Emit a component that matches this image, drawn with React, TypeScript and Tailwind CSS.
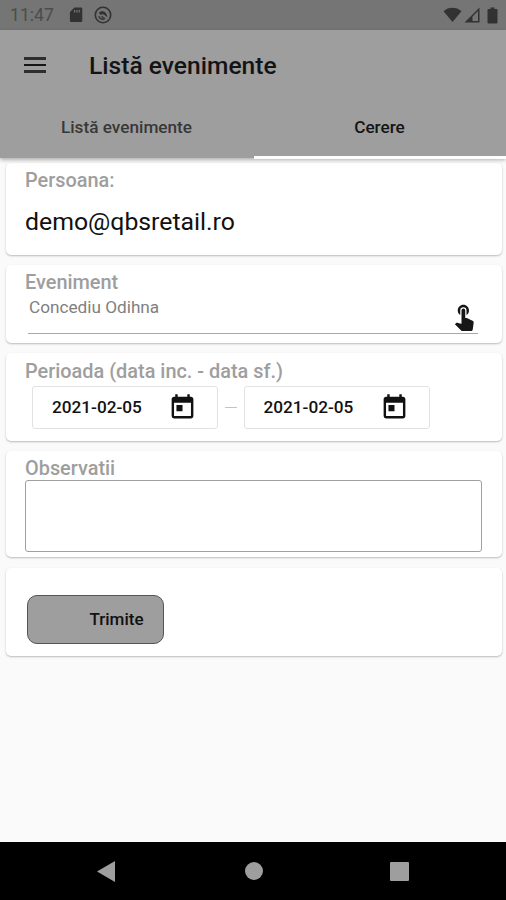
import type { ReactNode } from "react";
import { MdToday, MdTouchApp } from "react-icons/md";

interface CardProps {
  className: string;
  children: ReactNode;
}

function Card({ className, children }: CardProps) {
  return (
    <section
      className={`ml-1.5 mr-1 rounded-[5px] bg-white shadow-[0_1px_2px_rgba(0,0,0,0.26)] ${className}`}
    >
      {children}
    </section>
  );
}

function CardLabel({ children }: { children: ReactNode }) {
  return (
    <h2 className="h-6 whitespace-nowrap text-[19.9px] font-medium leading-[26px] text-[#9e9e9e]">
      {children}
    </h2>
  );
}

function DateField({ value }: { value: string }) {
  return (
    <button className="flex h-[43px] w-[186px] items-center rounded-[3px] border border-[#e2e2e2] pl-[19px] font-medium text-[#111]">
      <span className="w-[91px] whitespace-nowrap pt-px text-left text-[17.2px]">{value}</span>
      <MdToday className="ml-[25px] size-[29px] text-[#111]" />
    </button>
  );
}

function StatusBar() {
  return (
    <div className="flex h-[30px] items-center bg-[#757575] text-[#323232]">
      <span className="ml-2.5 w-[45px] whitespace-nowrap pt-px text-[17.6px] leading-[29px] text-[#4c4c4c]">
        11:47
      </span>
      <svg className="ml-[14px] h-4 w-3.5" viewBox="0 0 14 16">
        <path
          fill="currentColor"
          fillRule="evenodd"
          d="M5.5 0.5H12a1.3 1.3 0 0 1 1.3 1.3v12a1.3 1.3 0 0 1-1.3 1.3H2.2a1.3 1.3 0 0 1-1.3-1.3V5zM5 3v2.5h1.2V3zm2.3 0v2.5h1.2V3zm2.3 0v2.5h1.2V3z"
        />
      </svg>
      <svg
        className="ml-[11px] size-[18px]"
        viewBox="0 0 18 18"
        fill="none"
        stroke="currentColor"
      >
        <circle cx="9" cy="9" r="7.7" strokeWidth="1.6" />
        <path d="M5 6.500C8 3.800 13 5.500 13.300 11.300L9.500 8.200 6 8.800z" fill="currentColor" stroke="none" />
        <path d="M4.800 10.300C5.500 12.500 7.500 13.500 10 13.300" strokeWidth="1.3" />
        <path d="M7.500 10.200 11 13" strokeWidth="1.2" />
      </svg>
      <svg className="ml-auto h-4 w-[19px]" viewBox="0 0 19 16">
        <path fill="currentColor" d="M0.5 4.2C5.8-.3 13.2-.3 18.5 4.2L9.5 15z" />
      </svg>
      <svg className="ml-[2px] size-4" viewBox="0 0 16 16">
        <path fill="currentColor" fillRule="evenodd" d="M15.5.5v15H.5zM14 4 8.500 9.600V14H14z" />
      </svg>
      <svg className="ml-[7px] mr-[8px] h-[17px] w-[11px]" viewBox="0 0 11 17">
        <path
          fill="currentColor"
          d="M3.5.5h4V2H9.500a1 1 0 0 1 1 1v12.500a1 1 0 0 1-1 1h-8a1 1 0 0 1-1-1V3a1 1 0 0 1 1-1h2z"
        />
      </svg>
    </div>
  );
}

function Header() {
  return (
    <header className="relative z-10 h-32 bg-[#9e9e9e] shadow-[0_2px_4px_rgba(0,0,0,0.3)]">
      <div className="flex h-[70px] items-center">
        <button className="ml-6 flex w-[22px] flex-col gap-[4px]" aria-label="Meniu">
          <span className="h-[2.500px] bg-[#2e2e2e]" />
          <span className="h-[2.500px] bg-[#161616]" />
          <span className="h-[2.500px] bg-[#2e2e2e]" />
        </button>
        <h1 className="ml-[43px] whitespace-nowrap pt-[3px] text-[24.6px] font-medium text-[#141414]">
          Listă evenimente
        </h1>
      </div>
      <nav className="grid h-[59px] grid-cols-2 text-center text-[17.2px] font-medium">
        <button className="h-[59px] pb-[3px] text-[#383838]">Listă evenimente</button>
        <button className="ml-px h-[59px] border-b-[3px] border-[#fdfdfd] pr-px text-[#141414]">
          Cerere
        </button>
      </nav>
    </header>
  );
}

function NavigationBar() {
  return (
    <footer className="mt-auto flex h-[58px] items-center bg-black text-[#9e9e9e]">
      <svg className="ml-[97px] h-[21px] w-[18px]" viewBox="0 0 18 21">
        <path fill="currentColor" d="M18 0v21L0 10.500z" />
      </svg>
      <span className="ml-[130px] size-[18px] rounded-full bg-[#9e9e9e]" />
      <span className="ml-[127px] size-[19px] rounded-[1px] bg-[#9e9e9e]" />
    </footer>
  );
}

export default function App() {
  return (
    <div className="flex h-[900px] w-[506px] flex-col overflow-hidden bg-[#fafafa] font-['Roboto','Noto_Sans',sans-serif]">
      <StatusBar />
      <Header />

      <main>
        <Card className="mt-[5px] h-[92px] pl-[19px] pt-[5px]">
          <CardLabel>Persoana:</CardLabel>
          <p className="mt-[14px] text-[24.8px] leading-8 text-[#111]">demo@qbsretail.ro</p>
        </Card>

        <Card className="mt-[10px] h-[78px] pl-[19px] pt-[5px]">
          <CardLabel>Eveniment</CardLabel>
          <div className="ml-[3px] flex h-[40px] w-[450px] justify-between border-b border-[#a8a8a8]">
            <span className="pl-px pt-px text-[17.2px] leading-6 text-[#808080]">
              Concediu Odihna
            </span>
            <MdTouchApp className="mr-[-1px] mt-[7px] size-[30px] text-[#161616]" />
          </div>
        </Card>

        <Card className="mt-[10px] h-[88px] pl-[19px] pt-[6px]">
          <CardLabel>Perioada (data inc. - data sf.)</CardLabel>
          <div className="ml-[7px] mt-[3px] flex items-center">
            <DateField value="2021-02-05" />
            <span className="mx-[7px] h-px w-[11.500px] bg-[#c4c4c4]" />
            <DateField value="2021-02-05" />
          </div>
        </Card>

        <Card className="mt-[10px] h-[106px] pl-[19px] pt-[5px]">
          <CardLabel>Observatii</CardLabel>
          <textarea
            className="block h-[72px] w-[457px] resize-none rounded-[3px] border border-[#a0a0a0] bg-white"
            aria-label="Observatii"
          />
        </Card>

        <Card className="mt-[11px] h-[88px] pl-[21px] pt-[27px]">
          <button className="h-[49px] w-[137px] rounded-[10px] border border-[#555] bg-[#9e9e9e] pl-[42px] text-[17px] font-medium text-[#111]">
            Trimite
          </button>
        </Card>
      </main>

      <NavigationBar />
    </div>
  );
}
